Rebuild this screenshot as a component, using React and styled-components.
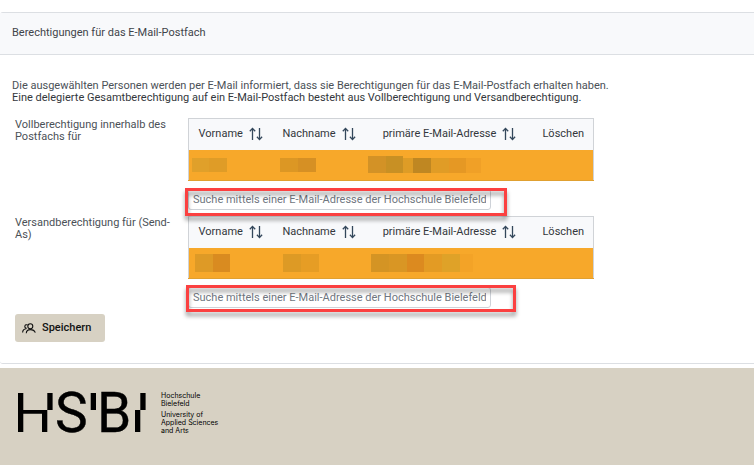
import React, { useState } from 'react'
import styled, { createGlobalStyle } from 'styled-components'

const columns = [
  { key: 'vorname', label: 'Vorname', width: 84, sortable: true },
  { key: 'nachname', label: 'Nachname', width: 93, sortable: true },
  { key: 'mail', label: 'primäre E-Mail-Adresse', width: 168, sortable: true },
  { key: 'loeschen', label: 'Löschen', width: 60, sortable: false },
]

// blocks: [color, width, height]
const permissions = [
  {
    id: 'voll',
    label: 'Vollberechtigung innerhalb des Postfachs für',
    mark: { top: -1, left: -3, width: 322, height: 28 },
    masked: {
      vorname: { indent: 3, blocks: [['#e0a02a', 17, 14], ['#df9c27', 18, 14]] },
      nachname: { indent: 7, blocks: [['#dc9724', 18, 14], ['#d69024', 18, 14]] },
      mail: {
        indent: 2,
        blocks: [
          ['#d39226', 18, 17],
          ['#c89024', 17, 17],
          ['#de9c26', 10, 15],
          ['#bf8722', 18, 15],
          ['#e09c26', 18, 15],
          ['#e59824', 17, 15],
          ['#f0a027', 15, 15],
        ],
      },
    },
  },
  {
    id: 'versand',
    label: 'Versandberechtigung für (Send-As)',
    mark: { top: -2, left: -2, width: 330, height: 27 },
    masked: {
      vorname: { indent: 6, blocks: [['#de9a26', 18, 18], ['#d98b20', 17, 18]] },
      nachname: { indent: 10, blocks: [['#dd9a25', 18, 18], ['#e69d25', 18, 18]] },
      mail: {
        indent: 5,
        blocks: [
          ['#d49424', 18, 18],
          ['#d99624', 18, 18],
          ['#dc8a1f', 17, 18],
          ['#e39b24', 18, 18],
          ['#dfa228', 18, 18],
          ['#f3a327', 13, 18],
        ],
      },
    },
  },
]

function SortIcon() {
  return (
    <svg width="14" height="14" viewBox="0 0 14 14" fill="none" stroke="#33475b" strokeWidth="1.3">
      <path d="M3.5 13V1.5M0.8 4.3L3.5 1.4L6.2 4.3" />
      <path d="M10.5 1V12.5M7.9 9.8L10.5 12.6L13.1 9.8" />
    </svg>
  )
}

function PeopleIcon() {
  return (
    <svg width="14" height="11" viewBox="0 0 14 11" fill="none" stroke="#111" strokeWidth="1.1">
      <circle cx="8.3" cy="3.3" r="2.5" />
      <path d="M4.3 10.2C4.3 7.8 6 6.6 8.3 6.6S12.6 7.6 13.3 9.6" />
      <path d="M5.6 2A1.8 1.8 0 1 0 4.7 5.3" />
      <path d="M0.6 9.6C0.7 7.3 1.9 6 4.2 5.8" />
    </svg>
  )
}

function Logo() {
  return (
    <LogoSvg width="204" height="43" viewBox="0 0 204 43" role="img" aria-label="HSBI">
      <path d="M0 1H5.3V18H29.3V40H24V21.7H5.3V40H0Z" />
      <rect x="29.3" y="1" width="5.3" height="17" />
      <rect x="72.7" y="1" width="5.3" height="17" />
      <rect x="117" y="18" width="5.3" height="22" />
      <rect x="122.3" y="1" width="5.3" height="17" />
      <LogoLetter x="37" y="40">S</LogoLetter>
      <LogoLetter x="79" y="40">B</LogoLetter>
      <LogoText x="143" y="6">Hochschule</LogoText>
      <LogoText x="143" y="14">Bielefeld</LogoText>
      <LogoText x="143" y="25">University of</LogoText>
      <LogoText x="143" y="33">Applied Sciences</LogoText>
      <LogoText x="143" y="41">and Arts</LogoText>
    </LogoSvg>
  )
}

function PermissionTable({ masked, label }) {
  return (
    <Table aria-label={label}>
      <colgroup>
        {columns.map((col) => (
          <Col key={col.key} $width={col.width} />
        ))}
      </colgroup>
      <thead>
        <tr>
          {columns.map((col) => (
            <HeadCell key={col.key} scope="col">
              {col.sortable ? (
                <SortButton type="button">
                  {col.label}
                  <SortIcon />
                </SortButton>
              ) : (
                col.label
              )}
            </HeadCell>
          ))}
        </tr>
      </thead>
      <tbody>
        <tr>
          {columns.map((col) => (
            <Cell key={col.key}>
              {masked[col.key] && (
                <Mask $indent={masked[col.key].indent}>
                  {masked[col.key].blocks.map(([color, width, height]) => (
                    <Block key={color} $color={color} $width={width} $height={height} />
                  ))}
                </Mask>
              )}
            </Cell>
          ))}
        </tr>
      </tbody>
    </Table>
  )
}

function Permission({ item }) {
  const [value, setValue] = useState('')

  return (
    <>
      <Label htmlFor={item.id}>{item.label}</Label>
      <Field>
        <PermissionTable masked={item.masked} label={item.label} />
        <SearchBox>
          <Search
            id={item.id}
            type="text"
            value={value}
            onChange={(e) => setValue(e.target.value)}
            placeholder="Suche mittels einer E-Mail-Adresse der Hochschule Bielefeld"
          />
          <Mark $box={item.mark} />
        </SearchBox>
      </Field>
    </>
  )
}

function App() {
  return (
    <Page>
      <GlobalStyle />
      <Card>
        <CardHeader>Berechtigungen für das E-Mail-Postfach</CardHeader>
        <CardBody>
          <Info>
            Die ausgewählten Personen werden per E-Mail informiert, dass sie Berechtigungen für das
            E-Mail-Postfach erhalten haben.
          </Info>
          <Info $dark>
            Eine delegierte Gesamtberechtigung auf ein E-Mail-Postfach besteht aus Vollberechtigung
            und Versandberechtigung.
          </Info>
          <Form onSubmit={(e) => e.preventDefault()}>
            {permissions.map((item) => (
              <Permission key={item.id} item={item} />
            ))}
            <SaveButton type="submit">
              <PeopleIcon />
              Speichern
            </SaveButton>
          </Form>
        </CardBody>
      </Card>
      <Footer>
        <Logo />
      </Footer>
    </Page>
  )
}

export default App

const GlobalStyle = createGlobalStyle`
* {
  box-sizing: border-box;
}
body {
  margin: 0;
  background: #fff;
  color: #4b5157;
  font-family: Roboto, "Liberation Sans", sans-serif;
  font-size: 11px;
  line-height: 12px;
}
button, input {
  font: inherit;
  color: inherit;
}
`
const Page = styled.div`
  display: flex;
  flex-direction: column;
  min-height: 100vh;
  padding-top: 12px;
`
const Card = styled.main`
  border-top: 1px solid #dcdfe3;
  border-bottom: 1px solid #dcdfe3;
  border-radius: 3px 0 0 3px;
`
const CardHeader = styled.h1`
  margin: 0;
  padding: 14px 12px 15px;
  background: #f8f9fb;
  border-bottom: 1px solid #dcdfe3;
  color: #3f444a;
  font-size: 11px;
  font-weight: normal;
`
const CardBody = styled.div`
  padding: 25px 12px 21px;
`
const Info = styled.p`
  margin: 0;
  color: ${(props) => (props.$dark ? '#33373c' : '#4b5157')};
`
const Form = styled.form`
  display: grid;
  grid-template-columns: 161px 1fr;
  gap: 6px 12px;
  padding: 14px 3px 0;
`
const Label = styled.label`
  padding-top: 1px;
`
const Field = styled.div`
  display: flex;
  flex-direction: column;
  align-items: flex-start;
  gap: 8px;
`
const Table = styled.table`
  table-layout: fixed;
  width: 406px;
  border-collapse: collapse;
  border: 1px solid #d0d3d7;
`
const Col = styled.col`
  width: ${(props) => props.$width}px;
`
const HeadCell = styled.th`
  height: 31px;
  padding: 0;
  background: #f8f9fb;
  color: #33373c;
  font-weight: normal;
  text-align: center;
  white-space: nowrap;
`
const SortButton = styled.button`
  display: inline-flex;
  align-items: center;
  gap: 6px;
  padding: 0;
  border: 0;
  background: none;
  cursor: pointer;
`
const Cell = styled.td`
  height: 31px;
  padding: 0;
  background: #f7a82a;
  border-bottom: 1px solid #e0a030;
`
const Mask = styled.div`
  display: flex;
  align-items: flex-end;
  padding-left: ${(props) => props.$indent}px;
`
const Block = styled.span`
  width: ${(props) => props.$width}px;
  height: ${(props) => props.$height}px;
  background: ${(props) => props.$color};
`
const SearchBox = styled.div`
  position: relative;
  width: 303px;
`
const Search = styled.input`
  display: block;
  width: 100%;
  height: 21px;
  padding: 0 4px;
  border: 1px solid #ced2d8;
  border-radius: 3px;
  background: #fff;

  &::placeholder {
    color: #6f7680;
    opacity: 1;
  }
`
const Mark = styled.div`
  position: absolute;
  top: ${(props) => props.$box.top}px;
  left: ${(props) => props.$box.left}px;
  width: ${(props) => props.$box.width}px;
  height: ${(props) => props.$box.height}px;
  border: 3px solid #fb4040;
  filter: drop-shadow(0 4px 2px rgba(0, 0, 0, 0.4));
  pointer-events: none;
`
const SaveButton = styled.button`
  display: flex;
  align-items: center;
  justify-self: start;
  gap: 6px;
  height: 28px;
  padding: 0 14px 0 7px;
  border: 0;
  border-radius: 3px;
  background: #d7d1c3;
  color: #111;
  font-weight: 500;
  cursor: pointer;
`
const Footer = styled.footer`
  flex: 1;
  margin-top: 4px;
  padding: 24px 18px;
  background: #d7d1c3;
`
const LogoSvg = styled.svg`
  display: block;
  overflow: visible;
`
const LogoLetter = styled.text`
  font-family: Roboto, sans-serif;
  font-size: 55px;
  stroke: #000;
  stroke-width: 0.4px;
`
const LogoText = styled.text`
  font-family: Inter, sans-serif;
  font-size: 7px;
`
